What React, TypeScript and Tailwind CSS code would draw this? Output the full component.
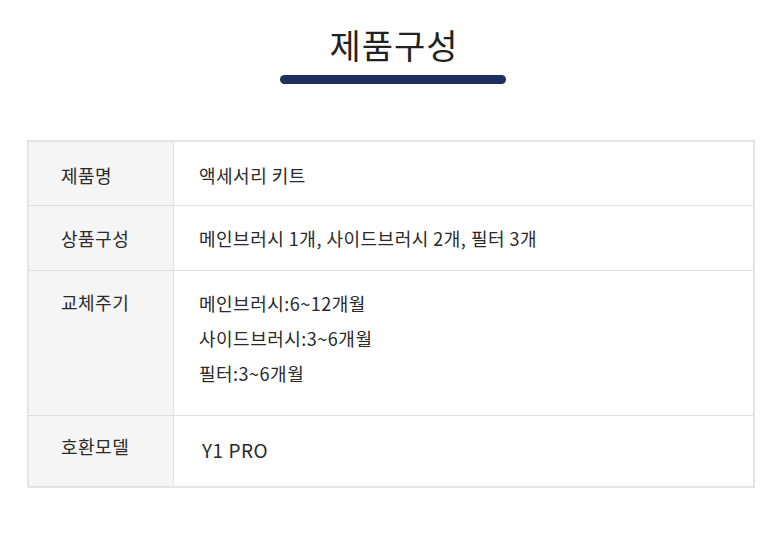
const rows = [
  { label: "제품명", value: "액세서리 키트", h: "h-[64px]", pad: "pt-[4px]" },
  { label: "상품구성", value: "메인브러시 1개, 사이드브러시 2개, 필터 3개", h: "h-[65px]", pad: "" },
];

export default function App() {
  return (
    <div className="w-[780px] h-[541px] bg-white text-[#2a2a2a] font-['Noto_Sans_CJK_KR','Noto_Sans',sans-serif]">
      {/* title */}
      <div className="flex flex-col items-center pt-[21px] pl-[8px]">
        <h1 className="text-[34px] leading-[48px] text-[#222] tracking-[1px]">제품구성</h1>
        <div className="mt-[6px] ml-[-3px] w-[226px] h-[9px] rounded-full bg-[#1d2f5c]" />
      </div>

      {/* spec table */}
      <div className="mt-[56px] ml-[27px] w-[728px] border-2 border-[#e4e4e4] text-[18px] tracking-[0.5px]">
        {rows.map((r) => (
          <div key={r.label} className={`flex ${r.h} border-b border-[#dedede]`}>
            <div className={`w-[145px] shrink-0 bg-[#f5f5f5] border-r border-[#e2e2e2] flex items-center pl-[32px] ${r.pad}`}>
              {r.label}
            </div>
            <div className={`flex items-center pl-[25px] ${r.pad}`}>{r.value}</div>
          </div>
        ))}
        <div className="flex h-[145px] border-b border-[#dedede]">
          <div className="w-[145px] shrink-0 bg-[#f5f5f5] border-r border-[#e2e2e2] pl-[32px] pt-[17px] leading-[28px]">
            교체주기
          </div>
          <div className="pl-[25px] pt-[15px] leading-[35px]">
            <div>메인브러시:6~12개월</div>
            <div>사이드브러시:3~6개월</div>
            <div>필터:3~6개월</div>
          </div>
        </div>
        <div className="flex h-[70px]">
          <div className="w-[145px] shrink-0 bg-[#f5f5f5] border-r border-[#e2e2e2] flex items-start pt-[17px] pl-[32px]">
            호환모델
          </div>
          <div className="flex items-start pt-[21px] pl-[28px] text-[19px] leading-[26px]">Y1 PRO</div>
        </div>
      </div>
    </div>
  );
}
